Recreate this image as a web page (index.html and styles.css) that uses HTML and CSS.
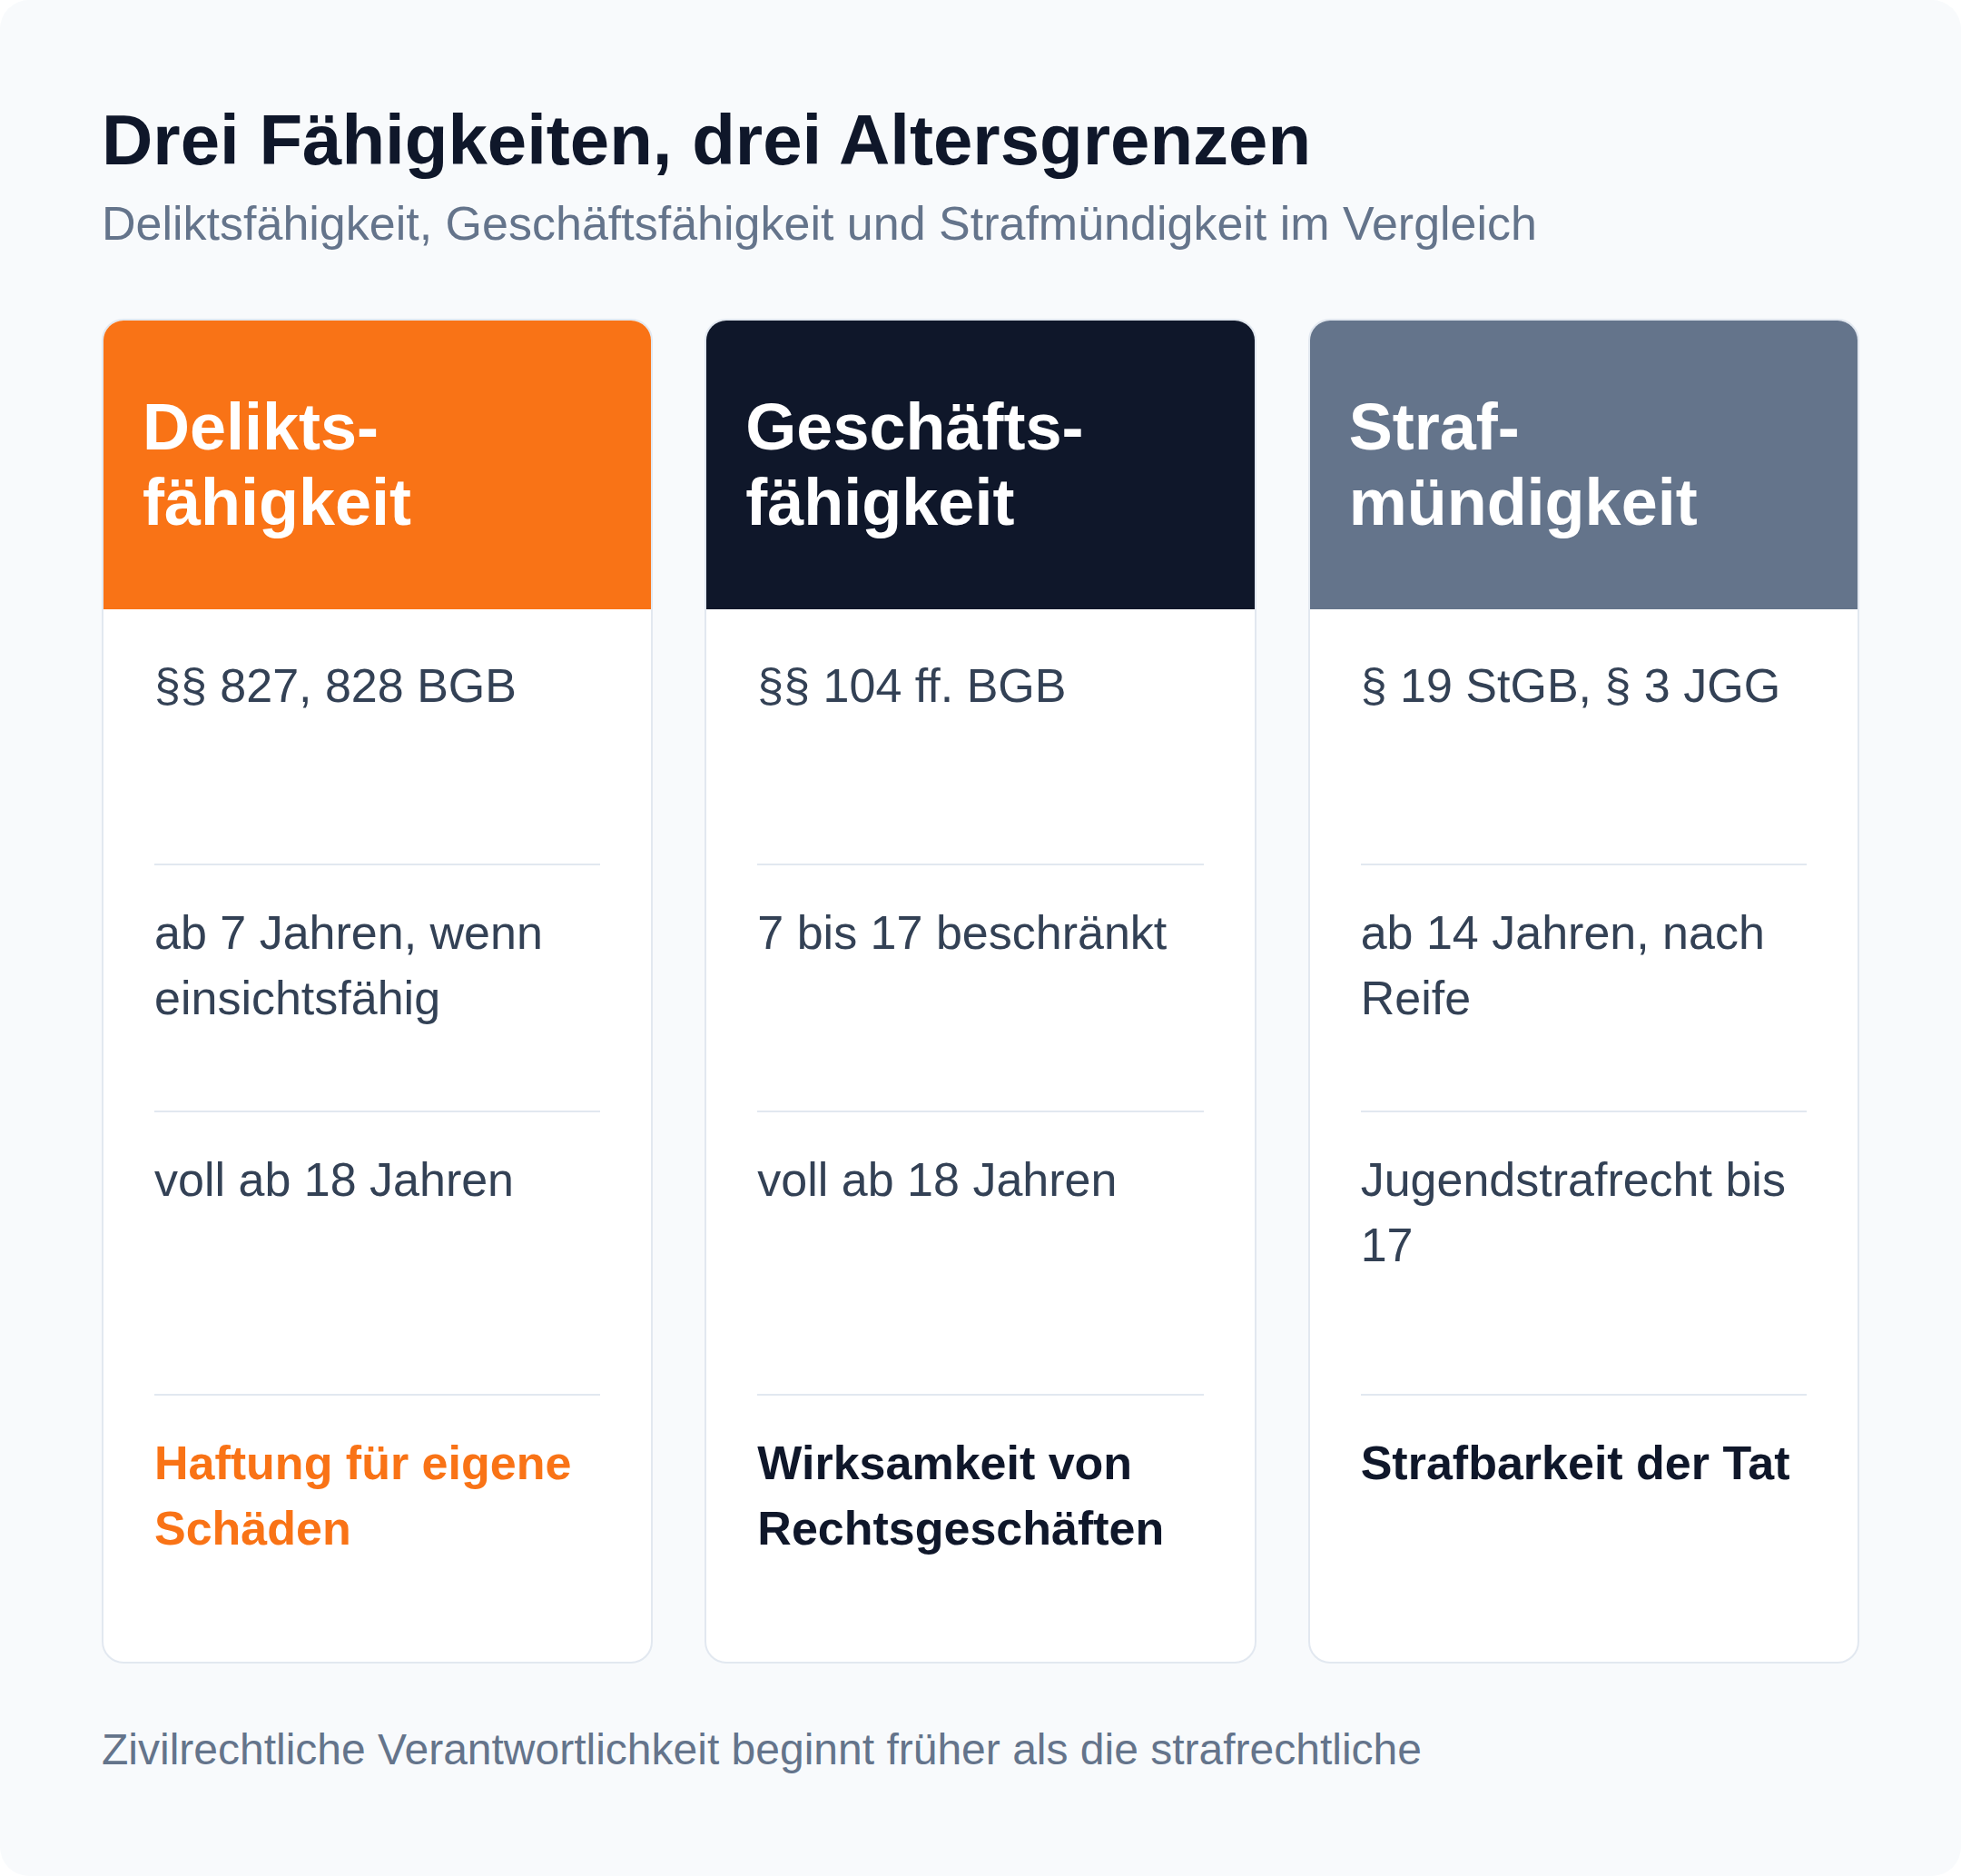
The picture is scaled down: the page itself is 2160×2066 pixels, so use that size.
FILE: index.html
```html
<!DOCTYPE html>
<html lang="de">
<head>
<meta charset="utf-8">
<title>Drei Fähigkeiten, drei Altersgrenzen</title>
<link rel="stylesheet" href="styles.css">
</head>
<body>
<main class="page">
  <h1 class="title">Drei Fähigkeiten, drei Altersgrenzen</h1>
  <p class="subtitle">Deliktsfähigkeit, Geschäftsfähigkeit und Strafmündigkeit im Vergleich</p>

  <section class="cards">
    <article class="card card--orange">
      <header class="card-head"><h2 class="card-title">Delikts-<br>fähigkeit</h2></header>
      <div class="card-body">
        <div class="row row--law">§§ 827, 828 BGB</div>
        <div class="row row--partial">ab 7 Jahren, wenn einsichtsfähig</div>
        <div class="row row--full">voll ab 18 Jahren</div>
        <div class="row row--scope">Haftung für eigene Schäden</div>
      </div>
    </article>

    <article class="card card--dark">
      <header class="card-head"><h2 class="card-title">Geschäfts-<br>fähigkeit</h2></header>
      <div class="card-body">
        <div class="row row--law">§§ 104 ff. BGB</div>
        <div class="row row--partial">7 bis 17 beschränkt</div>
        <div class="row row--full">voll ab 18 Jahren</div>
        <div class="row row--scope">Wirksamkeit von Rechtsgeschäften</div>
      </div>
    </article>

    <article class="card card--slate">
      <header class="card-head"><h2 class="card-title">Straf-<br>mündigkeit</h2></header>
      <div class="card-body">
        <div class="row row--law">§ 19 StGB, § 3 JGG</div>
        <div class="row row--partial">ab 14 Jahren, nach Reife</div>
        <div class="row row--full">Jugendstrafrecht bis 17</div>
        <div class="row row--scope">Strafbarkeit der Tat</div>
      </div>
    </article>
  </section>

  <p class="footnote">Zivilrechtliche Verantwortlichkeit beginnt früher als die strafrechtliche</p>
</main>
</body>
</html>
```

FILE: styles.css
```css
html, body {
  margin: 0;
  padding: 0;
  background: #ffffff;
}

.page {
  box-sizing: border-box;
  width: 2160px;
  min-height: 2066px;
  background: #f8fafc;
  border-radius: 32px;
  padding: 108px 112px 100px;
  font-family: "Liberation Sans", Arial, sans-serif;
}

.title {
  margin: 0;
  font-size: 78px;
  line-height: 1.2;
  font-weight: 700;
  color: #0f172a;
}

.subtitle {
  margin: 8px 0 0;
  font-size: 52px;
  line-height: 1.4;
  color: #64748b;
}

.cards {
  display: grid;
  grid-template-columns: repeat(3, 1fr);
  gap: 57px;
  margin-top: 69px;
}

.card {
  box-sizing: border-box;
  height: 1481px;
  display: flex;
  flex-direction: column;
  background: #ffffff;
  border: 2px solid #e2e8f0;
  border-radius: 24px;
  overflow: hidden;
}

.card-head {
  padding: 76px 43px;
  color: #ffffff;
}

.card--orange .card-head { background: #f97316; }
.card--dark .card-head { background: #0f172a; }
.card--slate .card-head { background: #64748b; }

.card-title {
  margin: 0;
  font-size: 72px;
  line-height: 1.15;
  font-weight: 700;
}

.card-body {
  flex: 1;
  display: flex;
  flex-direction: column;
  padding: 0 56px;
}

.row {
  box-sizing: border-box;
  font-size: 52px;
  line-height: 72px;
  color: #334155;
}

.row + .row {
  border-top: 2px solid #e2e8f0;
  padding-top: 38px;
}

.row--law {
  height: 280px;
  padding-top: 48px;
}

.row--partial { height: 272px; }
.row--full { height: 312px; }

.row--scope {
  flex: 1;
  font-weight: 700;
  color: #0f172a;
}

.card--orange .row--scope { color: #f97316; }

.footnote {
  margin: 61px 0 0;
  font-size: 48px;
  line-height: 1.4;
  color: #64748b;
}
```
